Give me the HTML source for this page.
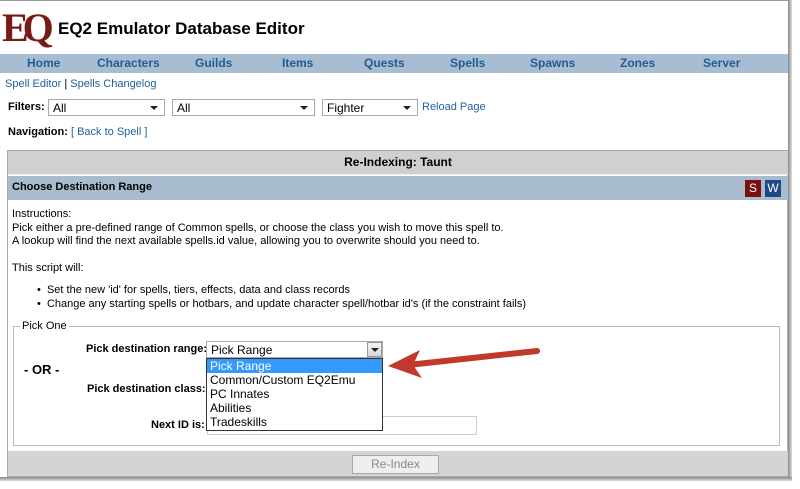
<!DOCTYPE html>
<html><head><style>
*{margin:0;padding:0;box-sizing:border-box}
body{width:800px;height:489px;background:#fff;font-family:"Liberation Sans",sans-serif;font-size:11px;color:#000;position:relative;overflow:hidden}
.a{position:absolute;white-space:nowrap}
a{color:#1f5f9a;text-decoration:none}
.nav{position:absolute;left:0;top:54px;width:788px;height:19px;background:#a8bdd1}
.nav span{position:absolute;top:2px;font-weight:bold;font-size:12px;color:#1e5e92}
.sel{position:absolute;height:17px;border:1px solid #a9a9a9;background:#fff;font-size:12px;padding:1px 4px}
.sel:after{content:"";position:absolute;right:6px;top:6px;border:4px solid transparent;border-top:4px solid #222}
</style></head><body>
<div class="a" style="left:0;top:0;width:788px;height:1px;background:#999"></div>
<div class="a" style="left:788px;top:0;width:4px;height:480px;background:linear-gradient(90deg,#888,#ddd)"></div>
<div class="a" style="left:0;top:477px;width:792px;height:4px;background:linear-gradient(#888,#ddd)"></div>
<div class="a" style="left:2px;top:6px;font-family:'Liberation Serif',serif;font-size:40px;font-weight:bold;color:#7a1a14;letter-spacing:-6px;line-height:44px">EQ</div>
<div class="a" style="left:58px;top:19px;font-size:17px;font-weight:bold">EQ2 Emulator Database Editor</div>
<div class="nav"><span style="left:27px">Home</span><span style="left:97px">Characters</span><span style="left:195px">Guilds</span><span style="left:282px">Items</span><span style="left:364px">Quests</span><span style="left:450px">Spells</span><span style="left:530px">Spawns</span><span style="left:620px">Zones</span><span style="left:703px">Server</span></div>
<div class="a" style="left:5px;top:78px"><a>Spell Editor</a> | <a>Spells Changelog</a></div>
<div class="a" style="left:8px;top:101px;font-weight:bold">Filters:</div>
<div class="sel" style="left:48px;top:99px;width:117px">All</div>
<div class="sel" style="left:172px;top:99px;width:143px">All</div>
<div class="sel" style="left:322px;top:99px;width:96px">Fighter</div>
<div class="a" style="left:422px;top:101px"><a>Reload Page</a></div>
<div class="a" style="left:8px;top:126px"><b>Navigation:</b> <a>[ Back to Spell ]</a></div>
<div class="a" style="left:7px;top:150px;width:781px;height:327px;border:1px solid #aaa"></div>
<div class="a" style="left:8px;top:151px;width:780px;height:24px;background:#d0d0d0;text-align:center;font-weight:bold;font-size:12px;line-height:22px;border-bottom:1px solid #eee">Re-Indexing: Taunt</div>
<div class="a" style="left:8px;top:176px;width:780px;height:24px;background:#a9bccd;font-weight:bold;padding:5px 4px">Choose Destination Range</div>
<div class="a" style="left:745px;top:180px;width:16px;height:17px;background:#7a1010;color:#fff;font-size:12px;text-align:center;line-height:17px">S</div>
<div class="a" style="left:765px;top:180px;width:16px;height:17px;background:#1d4a86;color:#fff;font-size:12px;text-align:center;line-height:17px">W</div>
<div class="a" style="left:12px;top:208px;line-height:13.5px">Instructions:<br>Pick either a pre-defined range of Common spells, or choose the class you wish to move this spell to.<br>A lookup will find the next available spells.id value, allowing you to overwrite should you need to.<br><br>This script will:</div>
<div class="a" style="left:37px;top:283px;line-height:14px">• &nbsp;Set the new 'id' for spells, tiers, effects, data and class records<br>• &nbsp;Change any starting spells or hotbars, and update character spell/hotbar id's (if the constraint fails)</div>
<div class="a" style="left:13px;top:326px;width:767px;height:120px;border:1px solid #bbb"></div>
<div class="a" style="left:20px;top:320px;background:#fff;padding:0 2px">Pick One</div>
<div class="a" style="left:86px;top:343px;font-weight:bold">Pick destination range:</div>
<div class="a" style="left:24px;top:362px;font-weight:bold;font-size:13px">- OR -</div>
<div class="a" style="left:87px;top:383px;font-weight:bold">Pick destination class:</div>
<div class="a" style="left:151px;top:419px;font-weight:bold">Next ID is:</div>
<div class="a" style="left:207px;top:416px;width:270px;height:19px;border:1px solid #ccc"></div>
<div class="sel" style="left:206px;top:341px;width:177px;font-size:12px">Pick Range</div>
<div class="a" style="left:367px;top:342px;width:15px;height:15px;background:linear-gradient(#f4f4f4,#d8d8d8);border:1px solid #999"></div>
<div class="a" style="left:371px;top:348px;border:4px solid transparent;border-top:4px solid #222"></div>
<div class="a" style="left:206px;top:358px;width:177px;height:73px;border:1px solid #333;background:#fff;font-size:12px;line-height:14px">
<div style="background:#3399ff;color:#fff;padding-left:3px">Pick Range</div>
<div style="padding-left:3px">Common/Custom EQ2Emu</div>
<div style="padding-left:3px">PC Innates</div>
<div style="padding-left:3px">Abilities</div>
<div style="padding-left:3px">Tradeskills</div></div>
<svg class="a" style="left:380px;top:340px" width="170" height="40"><path d="M157 11 L28 25" stroke="#c0392b" stroke-width="6" stroke-linecap="round"/><path d="M8 26 L40 10 L33 25 L42 38 Z" fill="#c0392b"/></svg>
<div class="a" style="left:8px;top:451px;width:780px;height:25px;background:#d4d4d4"></div>
<div class="a" style="left:352px;top:455px;width:87px;height:19px;border:1px solid #aaa;background:#eee;color:#888;text-align:center;font-size:12px;line-height:17px">Re-Index</div>
</body></html>
